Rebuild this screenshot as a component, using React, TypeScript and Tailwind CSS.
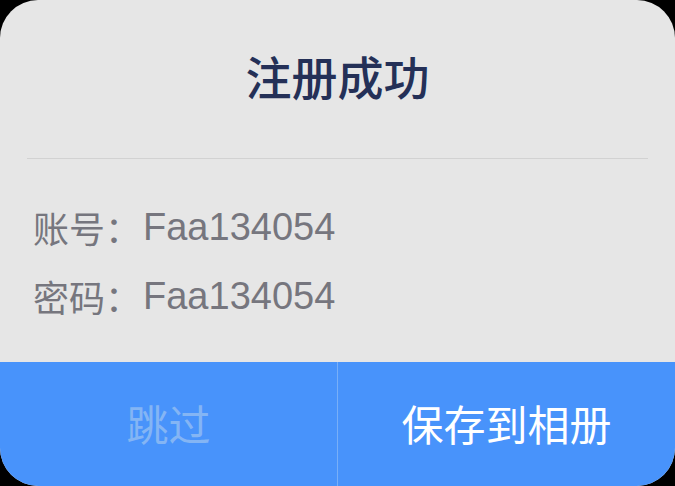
export default function App() {
  const cjk = { fontFamily: '"Noto Sans CJK SC", sans-serif' };
  return (
    <div className="w-[675px] h-[486px] bg-black">
      <div
        className="w-full h-full rounded-[38px] overflow-hidden bg-[#e6e6e6] flex flex-col"
        style={cjk}
      >
        <div className="h-[158px] flex items-center justify-center pb-[8px]">
          <h1 className="text-[46px] font-medium text-[#243057] leading-none">
            注册成功
          </h1>
        </div>
        <div className="mx-[27px] h-px bg-[#d2d2d2]" />
        <div className="flex-1 pt-[33px] pl-[33px] text-[#76767e]">
          {[
            ['账号：', 'Faa134054'],
            ['密码：', 'Faa134054'],
          ].map(([label, value]) => (
            <div key={label} className="h-[69px] flex items-center">
              <span className="text-[36px] leading-none">{label}</span>
              <span
                className="text-[38px] leading-none ml-[2px]"
                style={{ fontFamily: '"Liberation Sans", "Noto Sans CJK SC", sans-serif' }}
              >
                {value}
              </span>
            </div>
          ))}
        </div>
        <div className="h-[124px] flex bg-[#4893fb]">
          <div className="w-[337px] flex items-center justify-center text-[42px] text-[#84b5f4] leading-none pb-[3px]">
            跳过
          </div>
          <div className="w-px bg-[#78aff8]" />
          <div className="flex-1 flex items-center justify-center text-[42px] text-white leading-none pb-[3px]">
            保存到相册
          </div>
        </div>
      </div>
    </div>
  );
}
